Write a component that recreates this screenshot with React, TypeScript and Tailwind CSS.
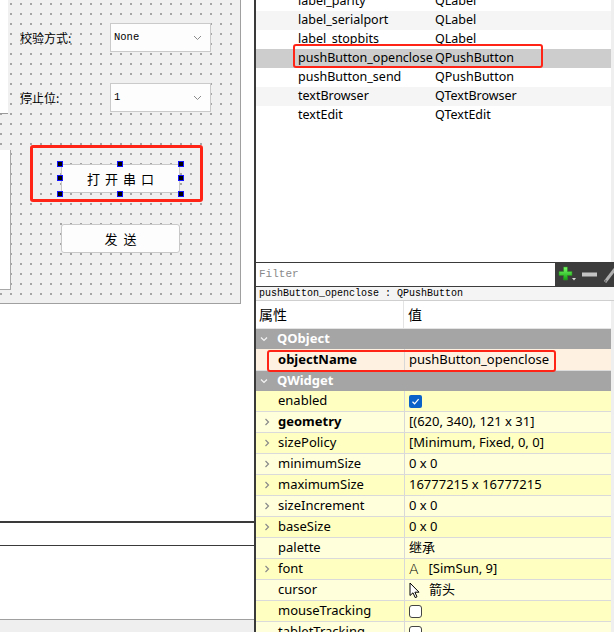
import type { ReactNode } from "react"

const ui = "font-['Noto_Sans','Noto_Sans_CJK_SC',sans-serif]"
const cjk = "font-['Noto_Sans_CJK_SC',sans-serif]"
const mono = "font-['Liberation_Mono','Noto_Sans_CJK_SC',monospace]"

const objects = [
  { name: "label_parity", cls: "QLabel", bg: "bg-white" },
  { name: "label_serialport", cls: "QLabel", bg: "bg-[#f5f5f5]" },
  { name: "label_stopbits", cls: "QLabel", bg: "bg-white" },
  { name: "pushButton_openclose", cls: "QPushButton", bg: "bg-[#cdcdcd]", hl: true },
  { name: "pushButton_send", cls: "QPushButton", bg: "bg-white" },
  { name: "textBrowser", cls: "QTextBrowser", bg: "bg-[#f5f5f5]" },
  { name: "textEdit", cls: "QTextEdit", bg: "bg-white" },
]

function CheckOn() {
  return (
    <span className="flex h-[13px] w-[13px] items-center justify-center rounded-[2px] bg-[#0b63c9]">
      <svg width="9" height="9" viewBox="0 0 9 9">
        <path d="M1.5 4.8 L3.6 6.8 L7.6 2.2" fill="none" stroke="white" strokeWidth="1.2" />
      </svg>
    </span>
  )
}

function CheckOff() {
  return <span className="block h-[13px] w-[13px] rounded-[3px] border border-[#444] bg-white" />
}

function CursorIcon() {
  return (
    <svg width="12" height="17" viewBox="0 0 12 17">
      <path d="M1 1 L1 13.5 L4 10.8 L6.2 15.6 L8 14.8 L5.9 10.2 L10 10.2 Z" fill="white" stroke="black" strokeWidth="1" strokeLinejoin="round" />
    </svg>
  )
}

const props: { name: string; bold?: boolean; chev?: boolean; value: ReactNode }[] = [
  { name: "enabled", value: <CheckOn /> },
  { name: "geometry", bold: true, chev: true, value: "[(620, 340), 121 x 31]" },
  { name: "sizePolicy", chev: true, value: "[Minimum, Fixed, 0, 0]" },
  { name: "minimumSize", chev: true, value: "0 x 0" },
  { name: "maximumSize", chev: true, value: "16777215 x 16777215" },
  { name: "sizeIncrement", chev: true, value: "0 x 0" },
  { name: "baseSize", chev: true, value: "0 x 0" },
  { name: "palette", value: "继承" },
  {
    name: "font",
    chev: true,
    value: (
      <span className="flex items-center gap-[10px]">
        <span className="font-['DejaVu_Sans',sans-serif] text-[14px] font-light leading-none">A</span>
        <span>[SimSun, 9]</span>
      </span>
    ),
  },
  {
    name: "cursor",
    value: (
      <span className="flex items-center gap-[8px]">
        <CursorIcon />
        <span>箭头</span>
      </span>
    ),
  },
  { name: "mouseTracking", value: <CheckOff /> },
  { name: "tabletTracking", value: <CheckOff /> },
]

function Chevron({ down, light }: { down?: boolean; light?: boolean }) {
  return (
    <svg width="8" height="8" viewBox="0 0 8 8" className={down ? "rotate-90" : ""}>
      <path d="M2.5 1 L5.5 4 L2.5 7" fill="none" stroke={light ? "#f4f4f4" : "#8a8a8a"} strokeWidth="1.2" />
    </svg>
  )
}

function Combo({ text }: { text: string }) {
  return (
    <div className="flex h-[29px] w-[101px] items-center justify-between border border-[#cacaca] bg-[#fdfdfd] pl-[3px] pr-[8px]">
      <span className={`${mono} text-[10.5px] text-black`}>{text}</span>
      <svg width="9" height="6" viewBox="0 0 9 6">
        <path d="M1 1 L4.5 4.5 L8 1" fill="none" stroke="#8c8c8c" strokeWidth="1" />
      </svg>
    </div>
  )
}

function Handle({ pos }: { pos: string }) {
  return <span className={`absolute h-[6px] w-[6px] border border-[#1010ff] bg-black ${pos}`} />
}

function FormCanvas() {
  return (
    <div className="relative h-[304px] w-[241px] border-r border-b border-[#a0a0a0] bg-[#f0f0f0] [background-image:radial-gradient(circle_at_1px_1px,#a4a4a4_0.7px,transparent_1.1px)] [background-size:10px_10px] [background-position:0px_3px]">
      <div className="absolute left-0 top-0 h-[114px] w-[8px] border-b border-[#9a9a9a] bg-white" />
      <div className="absolute left-0 top-[150px] h-[140px] w-[11px] border-r border-b border-[#a8a8a8] bg-white" />

      <div className={`flex flex-col pl-[20px] pt-[23px] ${cjk} text-[12px] text-black`}>
        <div className="flex items-center">
          <span className="w-[90px]">校验方式:</span>
          <Combo text="None" />
        </div>
        <div className="mt-[31px] flex items-center">
          <span className="w-[90px]">停止位:</span>
          <Combo text="1" />
        </div>

        <div className="ml-[10px] mt-[33px] h-[57px] w-[173px] rounded-[3px] border-[3px] border-[#ff2416] pl-[28px] pt-[16px]">
          <div className="relative h-[29px] w-[119px]">
            <div className="flex h-full w-full items-center justify-center rounded-[2px] border border-[#c8c8c8] bg-[#fdfdfd] pl-[5px] text-[13px] tracking-[5px]">
              打开串口
            </div>
            <Handle pos="left-[-4px] top-[-3px]" />
            <Handle pos="left-[56px] top-[-3px]" />
            <Handle pos="left-[117px] top-[-3px]" />
            <Handle pos="left-[-4px] top-[11px]" />
            <Handle pos="left-[117px] top-[11px]" />
            <Handle pos="left-[-4px] top-[27px]" />
            <Handle pos="left-[56px] top-[27px]" />
            <Handle pos="left-[117px] top-[27px]" />
          </div>
        </div>

        <div className="ml-[41px] mt-[22px] flex h-[29px] w-[119px] items-center justify-center rounded-[3px] border border-[#c8c8c8] bg-[#fdfdfd] pl-[6px] text-[13px] tracking-[6px]">
          发送
        </div>
      </div>
    </div>
  )
}

function LeftPanel() {
  return (
    <div className="flex h-full w-[256px] shrink-0 flex-col border-r-2 border-[#3a3a3a] bg-white">
      <FormCanvas />
      <div className="h-[217px]" />
      <div className="h-[25px] border-t-2 border-b border-[#3a3a3a] bg-white" />
      <div className="h-[73px]" />
      <div className="flex-1 border-t border-[#a0a0a0] bg-[#efefef]" />
    </div>
  )
}

function ObjectList() {
  return (
    <div className="flex h-[262px] overflow-hidden bg-white">
      <div className="mt-[-8px] flex-1">
        {objects.map((o) => (
          <div key={o.name} className={`relative flex h-[19px] items-center ${o.bg} ${ui} text-[12.5px] text-black`}>
            <span className="w-[179px] pl-[42px]">{o.name}</span>
            <span>{o.cls}</span>
            {o.hl && (
              <span className="absolute left-[37px] top-[-5px] h-[24px] w-[250px] rounded-[3px] border-2 border-[#ff2416]" />
            )}
          </div>
        ))}
      </div>
      <div className="w-[6px] bg-[#efefef]" />
    </div>
  )
}

function FilterBar() {
  return (
    <div className="flex h-[25px] items-center border-t border-[#3a3a3a] bg-[#3c3c3c] pb-[1px]">
      <div className={`flex h-[23px] w-[299px] items-center bg-white pl-[3px] ${mono} text-[11px] text-[#8a8a8a]`}>
        Filter
      </div>
      <div className="flex flex-1 items-center pl-[3px]">
        <svg width="20" height="18" viewBox="0 0 20 18">
          <defs>
            <linearGradient id="g" x1="0" y1="0" x2="0" y2="1">
              <stop offset="0" stopColor="#7dff6a" />
              <stop offset="1" stopColor="#10a010" />
            </linearGradient>
          </defs>
          <path d="M5.5 1 H9.5 V5.5 H14 V9.5 H9.5 V14 H5.5 V9.5 H1 V5.5 H5.5 Z" fill="url(#g)" stroke="#2d8a22" strokeWidth="0.6" />
          <path d="M14 12 L18 12 L16 14.5 Z" fill="#ddd" />
        </svg>
        <svg width="18" height="18" viewBox="0 0 18 18" className="ml-[3px]">
          <rect x="1" y="6.5" width="15" height="4" fill="#c4c4c4" />
        </svg>
        <svg width="14" height="18" viewBox="0 0 14 18" className="ml-[4px]">
          <path d="M2 16 L12 3" stroke="#b0b0b0" strokeWidth="3" />
          <path d="M2 16 L3 14" stroke="#777" strokeWidth="2" />
        </svg>
      </div>
    </div>
  )
}

function PropertyEditor() {
  return (
    <div className="flex flex-1 overflow-hidden">
      <div className="flex-1">
        <div className={`flex h-[28px] items-center border-b border-[#e4e4e4] bg-white ${cjk} text-[14px] text-black`}>
          <span className="flex h-full w-[148px] items-center border-r border-[#e4e4e4] pl-[3px]">属性</span>
          <span className="pl-[4px]">值</span>
        </div>

        <div className={`flex h-[20px] items-center gap-[9px] bg-[#a5a5a5] pl-[4px] ${ui} text-[13px] font-bold text-white`}>
          <Chevron down light />
          <span>QObject</span>
        </div>
        <div className={`relative flex h-[22px] items-center border-b border-[#dcdcdc] bg-[#fff1e1] ${ui} text-[13px] text-black`}>
          <span className="flex h-full w-[149px] items-center border-r border-[#d8d8d8] pl-[22px] font-bold">objectName</span>
          <span className="pl-[4px]">pushButton_openclose</span>
          <span className="absolute left-[11px] top-[1px] h-[22px] w-[289px] rounded-[3px] border-2 border-[#ff2416]" />
        </div>
        <div className={`flex h-[20px] items-center gap-[9px] bg-[#a5a5a5] pl-[4px] ${ui} text-[13px] font-bold text-white`}>
          <Chevron down light />
          <span>QWidget</span>
        </div>

        {props.map((p, i) => (
          <div
            key={p.name}
            className={`flex h-[21px] items-center border-b border-[#dadada] ${i % 2 === 0 ? "bg-[#ffffc2]" : "bg-[#ffffdc]"} ${ui} text-[13px] text-black`}
          >
            <span className="flex h-full w-[149px] items-center border-r border-[#d8d8d8]">
              <span className="flex w-[22px] justify-center">{p.chev && <Chevron />}</span>
              <span className={p.bold ? "font-bold" : ""}>{p.name}</span>
            </span>
            <span className="flex items-center pl-[4px]">{p.value}</span>
          </div>
        ))}
      </div>
      <div className="w-[6px] bg-[#efefef]" />
    </div>
  )
}

function RightPanel() {
  return (
    <div className="flex h-full flex-1 flex-col bg-white">
      <ObjectList />
      <FilterBar />
      <div className={`flex h-[14px] items-center border-b border-[#cfcfcf] bg-[#f4f4f4] pl-[3px] ${mono} text-[10px] text-black`}>
        pushButton_openclose : QPushButton
      </div>
      <PropertyEditor />
    </div>
  )
}

export default function App() {
  return (
    <div className="flex h-[632px] w-[614px] overflow-hidden bg-white">
      <LeftPanel />
      <RightPanel />
    </div>
  )
}
